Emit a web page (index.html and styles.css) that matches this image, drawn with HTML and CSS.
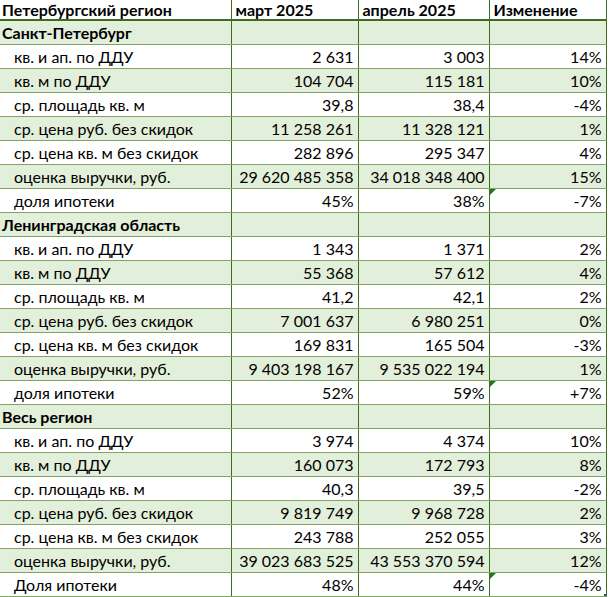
FILE: index.html
```html
<!DOCTYPE html>
<html lang="ru">
<head>
<meta charset="utf-8">
<link rel="stylesheet" href="styles.css">
</head>
<body>
<table class="sheet">
  <colgroup>
    <col class="c1"><col class="c2"><col class="c3"><col class="c4">
  </colgroup>
  <thead>
    <tr class="head">
      <th>Петербургский регион</th><th>март 2025</th><th>апрель 2025</th><th>Изменение</th>
    </tr>
  </thead>
  <tbody>
    <tr class="sec"><td>Санкт-Петербург</td><td></td><td></td><td></td></tr>
    <tr><td>кв. и ап. по ДДУ</td><td>2 631</td><td>3 003</td><td>14%</td></tr>
    <tr class="g"><td>кв. м по ДДУ</td><td>104 704</td><td>115 181</td><td>10%</td></tr>
    <tr><td>ср. площадь кв. м</td><td>39,8</td><td>38,4</td><td>-4%</td></tr>
    <tr class="g"><td>ср. цена руб. без скидок</td><td>11 258 261</td><td>11 328 121</td><td>1%</td></tr>
    <tr><td>ср. цена кв. м без скидок</td><td>282 896</td><td>295 347</td><td>4%</td></tr>
    <tr class="g"><td>оценка выручки, руб.</td><td>29 620 485 358</td><td>34 018 348 400</td><td>15%</td></tr>
    <tr><td>доля ипотеки</td><td>45%</td><td>38%</td><td class="flag">-7%</td></tr>

    <tr class="sec"><td>Ленинградская область</td><td></td><td></td><td></td></tr>
    <tr><td>кв. и ап. по ДДУ</td><td>1 343</td><td>1 371</td><td>2%</td></tr>
    <tr class="g"><td>кв. м по ДДУ</td><td>55 368</td><td>57 612</td><td>4%</td></tr>
    <tr><td>ср. площадь кв. м</td><td>41,2</td><td>42,1</td><td>2%</td></tr>
    <tr class="g"><td>ср. цена руб. без скидок</td><td>7 001 637</td><td>6 980 251</td><td>0%</td></tr>
    <tr><td>ср. цена кв. м без скидок</td><td>169 831</td><td>165 504</td><td>-3%</td></tr>
    <tr class="g"><td>оценка выручки, руб.</td><td>9 403 198 167</td><td>9 535 022 194</td><td>1%</td></tr>
    <tr><td>доля ипотеки</td><td>52%</td><td>59%</td><td class="flag">+7%</td></tr>

    <tr class="sec"><td>Весь регион</td><td></td><td></td><td></td></tr>
    <tr><td>кв. и ап. по ДДУ</td><td>3 974</td><td>4 374</td><td>10%</td></tr>
    <tr class="g"><td>кв. м по ДДУ</td><td>160 073</td><td>172 793</td><td>8%</td></tr>
    <tr><td>ср. площадь кв. м</td><td>40,3</td><td>39,5</td><td>-2%</td></tr>
    <tr class="g"><td>ср. цена руб. без скидок</td><td>9 819 749</td><td>9 968 728</td><td>2%</td></tr>
    <tr><td>ср. цена кв. м без скидок</td><td>243 788</td><td>252 055</td><td>3%</td></tr>
    <tr class="g"><td>оценка выручки, руб.</td><td>39 023 683 525</td><td>43 553 370 594</td><td>12%</td></tr>
    <tr><td>Доля ипотеки</td><td>48%</td><td>44%</td><td class="flag last">-4%</td></tr>
  </tbody>
</table>
</body>
</html>
```
FILE: styles.css
```css
html, body {
  margin: 0;
  padding: 0;
  background: #ffffff;
}
body {
  font-family: "Lato", "Open Sans", sans-serif;
  color: #000;
}
.sheet {
  border-collapse: collapse;
  table-layout: fixed;
  width: 606px;
  font-size: 16px;
}
.c1 { width: 231px; }
.c2 { width: 127px; }
.c3 { width: 131px; }
.c4 { width: 117px; }

.sheet th, .sheet td {
  height: 23px;
  padding: 0 4px 0 4px;
  border-left: 1px solid #3d6b1f;
  border-right: 1px solid #3d6b1f;
  border-top: 1px solid #7fa465;
  border-bottom: 1px solid #7fa465;
  white-space: nowrap;
  overflow: hidden;
  text-align: right;
  vertical-align: middle;
  line-height: 23px;
}
.sheet th:first-child, .sheet td:first-child {
  border-left: none;
  text-align: left;
  padding-left: 14px;
}
.head th {
  height: 19px;
  line-height: 19px;
  font-weight: bold;
  text-align: left;
  padding-left: 4px;
  border-top: none;
  border-bottom: 2px solid #3d6b1f;
}
.head th:first-child { padding-left: 2px; }
.sec td {
  background: #e2efda;
  font-weight: bold;
}
.sec td:first-child { padding-left: 2px; }
.g td { background: #e2efda; }

.flag { position: relative; }
.flag::before {
  content: "";
  position: absolute;
  left: 0;
  top: 0;
  border-top: 6px solid #1e7a1e;
  border-right: 6px solid transparent;
}
.last::after {
  content: "";
  position: absolute;
  right: -3px;
  bottom: -3px;
  width: 5px;
  height: 5px;
  background: #1f4e9a;
}
```
